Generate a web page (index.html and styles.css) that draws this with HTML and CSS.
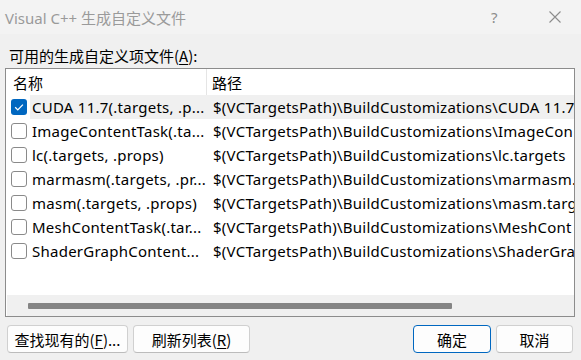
FILE: index.html
```html
<!DOCTYPE html>
<html lang="zh-CN">
<head>
<meta charset="utf-8">
<title>Visual C++ 生成自定义文件</title>
<link rel="stylesheet" href="styles.css">
</head>
<body>
<div class="dialog">
  <div class="titlebar">
    <span class="title">Visual C++ 生成自定义文件</span>
    <span class="tb-help">?</span>
    <svg class="tb-close" width="12" height="12" viewBox="0 0 12 12"><path d="M0.5 0.5 L11.5 11.5 M11.5 0.5 L0.5 11.5" stroke="#8c8c8c" stroke-width="1.1" fill="none"/></svg>
  </div>
  <div class="label">可用的生成自定义项文件(<u>A</u>):</div>
  <div class="listbox">
    <div class="header">
      <div class="hcol c1">名称</div>
      <div class="hcol c2">路径</div>
    </div>
    <div class="rows">
      <div class="row selected">
        <span class="cb checked"><svg width="16" height="16" viewBox="0 0 16 16"><path d="M4.2 8.3 L6.8 10.9 L11.9 5.6" stroke="#fff" stroke-width="1.3" fill="none"/></svg></span>
        <span class="c1 name">CUDA 11.7(.targets, .p...</span>
        <span class="c2 path">$(VCTargetsPath)\BuildCustomizations\CUDA 11.7</span>
      </div>
      <div class="row">
        <span class="cb"></span>
        <span class="c1 name">ImageContentTask(.ta...</span>
        <span class="c2 path">$(VCTargetsPath)\BuildCustomizations\ImageCon</span>
      </div>
      <div class="row">
        <span class="cb"></span>
        <span class="c1 name">lc(.targets, .props)</span>
        <span class="c2 path">$(VCTargetsPath)\BuildCustomizations\lc.targets</span>
      </div>
      <div class="row">
        <span class="cb"></span>
        <span class="c1 name">marmasm(.targets, .pr...</span>
        <span class="c2 path">$(VCTargetsPath)\BuildCustomizations\marmasm.</span>
      </div>
      <div class="row">
        <span class="cb"></span>
        <span class="c1 name">masm(.targets, .props)</span>
        <span class="c2 path">$(VCTargetsPath)\BuildCustomizations\masm.targ</span>
      </div>
      <div class="row">
        <span class="cb"></span>
        <span class="c1 name">MeshContentTask(.tar...</span>
        <span class="c2 path">$(VCTargetsPath)\BuildCustomizations\MeshCont</span>
      </div>
      <div class="row">
        <span class="cb"></span>
        <span class="c1 name">ShaderGraphContent...</span>
        <span class="c2 path">$(VCTargetsPath)\BuildCustomizations\ShaderGra</span>
      </div>
    </div>
    <div class="hscroll"><div class="thumb"></div></div>
  </div>
  <div class="buttons">
    <button class="btn b-find">查找现有的(<u>F</u>)...</button>
    <button class="btn b-refresh">刷新列表(<u>R</u>)</button>
    <span class="spacer"></span>
    <button class="btn b-ok">确定</button>
    <button class="btn b-cancel">取消</button>
  </div>
</div>
</body>
</html>
```
FILE: styles.css
```css
html, body {
  margin: 0;
  padding: 0;
  background: #f0f0f0;
}
body {
  width: 581px;
  height: 360px;
  overflow: hidden;
  font-family: "Noto Sans", "Noto Sans CJK SC", sans-serif;
  color: #000;
}
.dialog {
  display: flex;
  flex-direction: column;
  height: 360px;
}
.titlebar {
  height: 34px;
  background: #f3f3f3;
  display: flex;
  align-items: center;
  padding-left: 5px;
  font-family: "Noto Sans", "Noto Sans CJK SC", sans-serif;
}
.title {
  font-size: 15px;
  color: #9a9a9a;
  flex: 1;
}
.tb-help {
  font-size: 15px;
  color: #8c8c8c;
  width: 10px;
  margin-right: 48px;
}
.tb-close {
  margin-right: 20px;
}
.label {
  height: 34px;
  display: flex;
  align-items: center;
  padding-left: 9px;
  padding-top: 8px;
  box-sizing: border-box;
  font-size: 15px;
  font-family: "Noto Sans CJK SC", sans-serif;
}
.label u, .btn u {
  text-underline-offset: 2px;
}
.listbox {
  margin-left: 5px;
  width: 570px;
  height: 249px;
  box-sizing: border-box;
  border: 1px solid #8c8c8c;
  background: #fff;
  display: flex;
  flex-direction: column;
  overflow: hidden;
}
.header {
  height: 26px;
  display: flex;
  flex: none;
  font-family: "Noto Sans CJK SC", sans-serif;
  font-size: 15px;
}
.hcol {
  display: flex;
  align-items: center;
}
.hcol.c1 {
  width: 193px;
  padding-left: 7px;
  border-right: 1px solid #e5e5e5;
}
.hcol.c2 {
  padding-left: 5px;
}
.rows {
  flex: 1;
}
.row {
  height: 24px;
  display: flex;
  align-items: center;
  font-size: 15px;
  letter-spacing: 0.25px;
  white-space: nowrap;
  overflow: hidden;
  position: relative;
}
.row.selected::before {
  content: "";
  position: absolute;
  left: 24px;
  right: 0;
  top: 0;
  bottom: 0;
  background: #f0f0f0;
}
.cb {
  position: relative;
  flex: none;
  width: 16px;
  height: 16px;
  box-sizing: border-box;
  margin-left: 5px;
  margin-right: 5px;
  border: 1px solid #8a8a8a;
  border-radius: 3px;
  background: #fff;
  display: flex;
}
.cb.checked {
  border: none;
  background: #0067c0;
}
.row .c1 {
  position: relative;
  width: 181px;
  flex: none;
  overflow: hidden;
}
.row .c2 {
  position: relative;
  flex: none;
}
.hscroll {
  flex: none;
  height: 21px;
  margin: 0 0 0 1px;
  background: #f0f0f0;
  position: relative;
  display: flex;
  align-items: center;
}
.thumb {
  margin-left: 21px;
  width: 424px;
  height: 6px;
  background: #858585;
  border-radius: 1px;
}
.buttons {
  display: flex;
  padding: 8px 7px 0 7px;
  gap: 5px;
}
.spacer {
  flex: 1;
}
.btn {
  height: 28px;
  box-sizing: border-box;
  border: 1px solid #d0d0d0;
  border-bottom-color: #bcbcbc;
  border-radius: 4px;
  background: #fdfdfd;
  font-family: "Noto Sans CJK SC", sans-serif;
  font-size: 15px;
  color: #000;
  padding: 0;
  line-height: 1;
}
.b-find { width: 121px; }
.b-refresh { width: 117px; }
.b-ok {
  width: 78px;
  border: 1px solid #0067c0;
}
.b-cancel {
  width: 77px;
  margin-right: 1px;
}
```
